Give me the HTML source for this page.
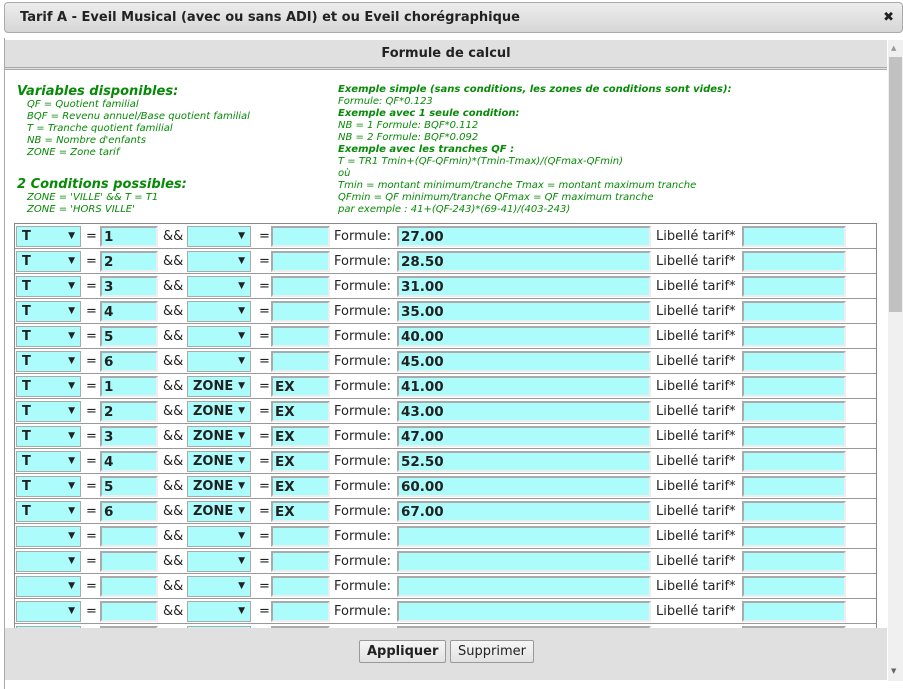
<!DOCTYPE html>
<html><head><meta charset="utf-8"><style>
*{box-sizing:border-box;margin:0;padding:0}
body{width:903px;height:689px;background:#fff;font-family:"DejaVu Sans","Liberation Sans",sans-serif;position:relative;overflow:hidden;color:#222}
.title{position:absolute;left:4px;top:2px;width:899px;height:31px;border:1px solid #aaa;border-radius:4px;background:linear-gradient(#ededed,#d6d6d6);font-weight:bold;font-size:13px;line-height:29px;padding-left:15px;color:#222}
.x{position:absolute;right:8px;top:0;font-size:13px}
.frame{position:absolute;left:4px;top:38px;width:899px;height:651px;border-left:1px solid #aaa}
.hdr{position:absolute;left:5px;top:40px;width:882px;height:30px;background:#e0e0e0;border-bottom:3px double #aaa;text-align:center;font-weight:bold;font-size:13px;line-height:27px;color:#222}
.g{position:absolute;color:#078a07;font-style:italic;font-size:10px;line-height:12px}
.g b{font-size:10px}
.h{position:absolute;color:#078a07;font-style:italic;font-weight:bold;font-size:13px}
.tbl{position:absolute;left:14px;top:223px;width:863px;height:405px;border:1px solid #888;border-bottom:none;overflow:hidden}
.r{position:relative;height:25px;border-bottom:1px solid #999}
.r>*{position:absolute;top:2px;height:21px;font-size:13px;line-height:19px}
.s{background:#adfcfc;border:1px solid #aaa;font-weight:bold;padding-left:5px}
.s:after{content:"▼";position:absolute;right:5px;top:0;font-size:9px}
.i{background:#adfcfc;border:2px solid #aaa;border-right-color:#eee;border-bottom-color:#eee;font-weight:bold;padding-left:2px;font-size:13.5px}
.t{line-height:21px}
.foot{position:absolute;left:5px;top:628px;width:882px;height:52px;background:#e0e0e0}
.btn{position:absolute;top:640px;height:23px;border:1px solid #999;background:linear-gradient(#f6f6f6,#e2e2e2);font-size:13px;line-height:21px;padding:0 7px;border-radius:2px}
.sb{position:absolute;left:888px;top:40px;width:15px;height:641px;background:#f0f0f0}
.th{position:absolute;left:889px;top:57px;width:13px;height:255px;background:#c1c1c1}
</style></head><body>
<div class="title">Tarif A - Eveil Musical (avec ou sans ADI) et ou Eveil chorégraphique<span class="x">✖</span></div>
<div class="frame"></div>
<div class="hdr">Formule de calcul</div>
<div class="h" style="left:17px;top:84px">Variables disponibles:</div>
<div class="g" style="left:27px;top:99px">QF = Quotient familial<br>BQF = Revenu annuel/Base quotient familial<br>T = Tranche quotient familial<br>NB = Nombre d'enfants<br>ZONE = Zone tarif</div>
<div class="h" style="left:17px;top:177px">2 Conditions possibles:</div>
<div class="g" style="left:27px;top:192px">ZONE = 'VILLE' &amp;&amp; T = T1<br>ZONE = 'HORS VILLE'</div>
<div class="g" style="left:338px;top:84px"><b>Exemple simple (sans conditions, les zones de conditions sont vides):</b><br>Formule: QF*0.123<br><b>Exemple avec 1 seule condition:</b><br>NB = 1 Formule: BQF*0.112<br>NB = 2 Formule: BQF*0.092<br><b>Exemple avec les tranches QF :</b><br>T = TR1 Tmin+(QF-QFmin)*(Tmin-Tmax)/(QFmax-QFmin)<br>où<br>Tmin = montant minimum/tranche Tmax = montant maximum tranche<br>QFmin = QF minimum/tranche QFmax = QF maximum tranche<br>par exemple : 41+(QF-243)*(69-41)/(403-243)</div>
<div class="tbl">
<div class="r"><div class="s" style="left:1px;width:65px">T</div><div class="t" style="left:71px">=</div><div class="i" style="left:85px;width:58px">1</div><div class="t" style="left:148px">&amp;&amp;</div><div class="s" style="left:172px;width:64px"></div><div class="t" style="left:244px">=</div><div class="i" style="left:256px;width:59px"></div><div class="t" style="left:319px">Formule:</div><div class="i" style="left:382px;width:254px">27.00</div><div class="t" style="left:641px">Libellé tarif*</div><div class="i" style="left:727px;width:104px"></div></div>
<div class="r"><div class="s" style="left:1px;width:65px">T</div><div class="t" style="left:71px">=</div><div class="i" style="left:85px;width:58px">2</div><div class="t" style="left:148px">&amp;&amp;</div><div class="s" style="left:172px;width:64px"></div><div class="t" style="left:244px">=</div><div class="i" style="left:256px;width:59px"></div><div class="t" style="left:319px">Formule:</div><div class="i" style="left:382px;width:254px">28.50</div><div class="t" style="left:641px">Libellé tarif*</div><div class="i" style="left:727px;width:104px"></div></div>
<div class="r"><div class="s" style="left:1px;width:65px">T</div><div class="t" style="left:71px">=</div><div class="i" style="left:85px;width:58px">3</div><div class="t" style="left:148px">&amp;&amp;</div><div class="s" style="left:172px;width:64px"></div><div class="t" style="left:244px">=</div><div class="i" style="left:256px;width:59px"></div><div class="t" style="left:319px">Formule:</div><div class="i" style="left:382px;width:254px">31.00</div><div class="t" style="left:641px">Libellé tarif*</div><div class="i" style="left:727px;width:104px"></div></div>
<div class="r"><div class="s" style="left:1px;width:65px">T</div><div class="t" style="left:71px">=</div><div class="i" style="left:85px;width:58px">4</div><div class="t" style="left:148px">&amp;&amp;</div><div class="s" style="left:172px;width:64px"></div><div class="t" style="left:244px">=</div><div class="i" style="left:256px;width:59px"></div><div class="t" style="left:319px">Formule:</div><div class="i" style="left:382px;width:254px">35.00</div><div class="t" style="left:641px">Libellé tarif*</div><div class="i" style="left:727px;width:104px"></div></div>
<div class="r"><div class="s" style="left:1px;width:65px">T</div><div class="t" style="left:71px">=</div><div class="i" style="left:85px;width:58px">5</div><div class="t" style="left:148px">&amp;&amp;</div><div class="s" style="left:172px;width:64px"></div><div class="t" style="left:244px">=</div><div class="i" style="left:256px;width:59px"></div><div class="t" style="left:319px">Formule:</div><div class="i" style="left:382px;width:254px">40.00</div><div class="t" style="left:641px">Libellé tarif*</div><div class="i" style="left:727px;width:104px"></div></div>
<div class="r"><div class="s" style="left:1px;width:65px">T</div><div class="t" style="left:71px">=</div><div class="i" style="left:85px;width:58px">6</div><div class="t" style="left:148px">&amp;&amp;</div><div class="s" style="left:172px;width:64px"></div><div class="t" style="left:244px">=</div><div class="i" style="left:256px;width:59px"></div><div class="t" style="left:319px">Formule:</div><div class="i" style="left:382px;width:254px">45.00</div><div class="t" style="left:641px">Libellé tarif*</div><div class="i" style="left:727px;width:104px"></div></div>
<div class="r"><div class="s" style="left:1px;width:65px">T</div><div class="t" style="left:71px">=</div><div class="i" style="left:85px;width:58px">1</div><div class="t" style="left:148px">&amp;&amp;</div><div class="s" style="left:172px;width:64px">ZONE</div><div class="t" style="left:244px">=</div><div class="i" style="left:256px;width:59px">EX</div><div class="t" style="left:319px">Formule:</div><div class="i" style="left:382px;width:254px">41.00</div><div class="t" style="left:641px">Libellé tarif*</div><div class="i" style="left:727px;width:104px"></div></div>
<div class="r"><div class="s" style="left:1px;width:65px">T</div><div class="t" style="left:71px">=</div><div class="i" style="left:85px;width:58px">2</div><div class="t" style="left:148px">&amp;&amp;</div><div class="s" style="left:172px;width:64px">ZONE</div><div class="t" style="left:244px">=</div><div class="i" style="left:256px;width:59px">EX</div><div class="t" style="left:319px">Formule:</div><div class="i" style="left:382px;width:254px">43.00</div><div class="t" style="left:641px">Libellé tarif*</div><div class="i" style="left:727px;width:104px"></div></div>
<div class="r"><div class="s" style="left:1px;width:65px">T</div><div class="t" style="left:71px">=</div><div class="i" style="left:85px;width:58px">3</div><div class="t" style="left:148px">&amp;&amp;</div><div class="s" style="left:172px;width:64px">ZONE</div><div class="t" style="left:244px">=</div><div class="i" style="left:256px;width:59px">EX</div><div class="t" style="left:319px">Formule:</div><div class="i" style="left:382px;width:254px">47.00</div><div class="t" style="left:641px">Libellé tarif*</div><div class="i" style="left:727px;width:104px"></div></div>
<div class="r"><div class="s" style="left:1px;width:65px">T</div><div class="t" style="left:71px">=</div><div class="i" style="left:85px;width:58px">4</div><div class="t" style="left:148px">&amp;&amp;</div><div class="s" style="left:172px;width:64px">ZONE</div><div class="t" style="left:244px">=</div><div class="i" style="left:256px;width:59px">EX</div><div class="t" style="left:319px">Formule:</div><div class="i" style="left:382px;width:254px">52.50</div><div class="t" style="left:641px">Libellé tarif*</div><div class="i" style="left:727px;width:104px"></div></div>
<div class="r"><div class="s" style="left:1px;width:65px">T</div><div class="t" style="left:71px">=</div><div class="i" style="left:85px;width:58px">5</div><div class="t" style="left:148px">&amp;&amp;</div><div class="s" style="left:172px;width:64px">ZONE</div><div class="t" style="left:244px">=</div><div class="i" style="left:256px;width:59px">EX</div><div class="t" style="left:319px">Formule:</div><div class="i" style="left:382px;width:254px">60.00</div><div class="t" style="left:641px">Libellé tarif*</div><div class="i" style="left:727px;width:104px"></div></div>
<div class="r"><div class="s" style="left:1px;width:65px">T</div><div class="t" style="left:71px">=</div><div class="i" style="left:85px;width:58px">6</div><div class="t" style="left:148px">&amp;&amp;</div><div class="s" style="left:172px;width:64px">ZONE</div><div class="t" style="left:244px">=</div><div class="i" style="left:256px;width:59px">EX</div><div class="t" style="left:319px">Formule:</div><div class="i" style="left:382px;width:254px">67.00</div><div class="t" style="left:641px">Libellé tarif*</div><div class="i" style="left:727px;width:104px"></div></div>
<div class="r"><div class="s" style="left:1px;width:65px"></div><div class="t" style="left:71px">=</div><div class="i" style="left:85px;width:58px"></div><div class="t" style="left:148px">&amp;&amp;</div><div class="s" style="left:172px;width:64px"></div><div class="t" style="left:244px">=</div><div class="i" style="left:256px;width:59px"></div><div class="t" style="left:319px">Formule:</div><div class="i" style="left:382px;width:254px"></div><div class="t" style="left:641px">Libellé tarif*</div><div class="i" style="left:727px;width:104px"></div></div>
<div class="r"><div class="s" style="left:1px;width:65px"></div><div class="t" style="left:71px">=</div><div class="i" style="left:85px;width:58px"></div><div class="t" style="left:148px">&amp;&amp;</div><div class="s" style="left:172px;width:64px"></div><div class="t" style="left:244px">=</div><div class="i" style="left:256px;width:59px"></div><div class="t" style="left:319px">Formule:</div><div class="i" style="left:382px;width:254px"></div><div class="t" style="left:641px">Libellé tarif*</div><div class="i" style="left:727px;width:104px"></div></div>
<div class="r"><div class="s" style="left:1px;width:65px"></div><div class="t" style="left:71px">=</div><div class="i" style="left:85px;width:58px"></div><div class="t" style="left:148px">&amp;&amp;</div><div class="s" style="left:172px;width:64px"></div><div class="t" style="left:244px">=</div><div class="i" style="left:256px;width:59px"></div><div class="t" style="left:319px">Formule:</div><div class="i" style="left:382px;width:254px"></div><div class="t" style="left:641px">Libellé tarif*</div><div class="i" style="left:727px;width:104px"></div></div>
<div class="r"><div class="s" style="left:1px;width:65px"></div><div class="t" style="left:71px">=</div><div class="i" style="left:85px;width:58px"></div><div class="t" style="left:148px">&amp;&amp;</div><div class="s" style="left:172px;width:64px"></div><div class="t" style="left:244px">=</div><div class="i" style="left:256px;width:59px"></div><div class="t" style="left:319px">Formule:</div><div class="i" style="left:382px;width:254px"></div><div class="t" style="left:641px">Libellé tarif*</div><div class="i" style="left:727px;width:104px"></div></div>
<div class="r"><div class="s" style="left:1px;width:65px"></div><div class="t" style="left:71px">=</div><div class="i" style="left:85px;width:58px"></div><div class="t" style="left:148px">&amp;&amp;</div><div class="s" style="left:172px;width:64px"></div><div class="t" style="left:244px">=</div><div class="i" style="left:256px;width:59px"></div><div class="t" style="left:319px">Formule:</div><div class="i" style="left:382px;width:254px"></div><div class="t" style="left:641px">Libellé tarif*</div><div class="i" style="left:727px;width:104px"></div></div>
</div>
<div class="foot"></div>
<div class="btn" style="left:359px;font-weight:bold">Appliquer</div>
<div class="btn" style="left:450px">Supprimer</div>
<div class="sb"></div>
<div class="th"></div>
<div style="position:absolute;left:891px;top:44px;font-size:7px;color:#999">▲</div>
<div style="position:absolute;left:891px;top:667px;font-size:7px;color:#666">▼</div>
</body></html>
